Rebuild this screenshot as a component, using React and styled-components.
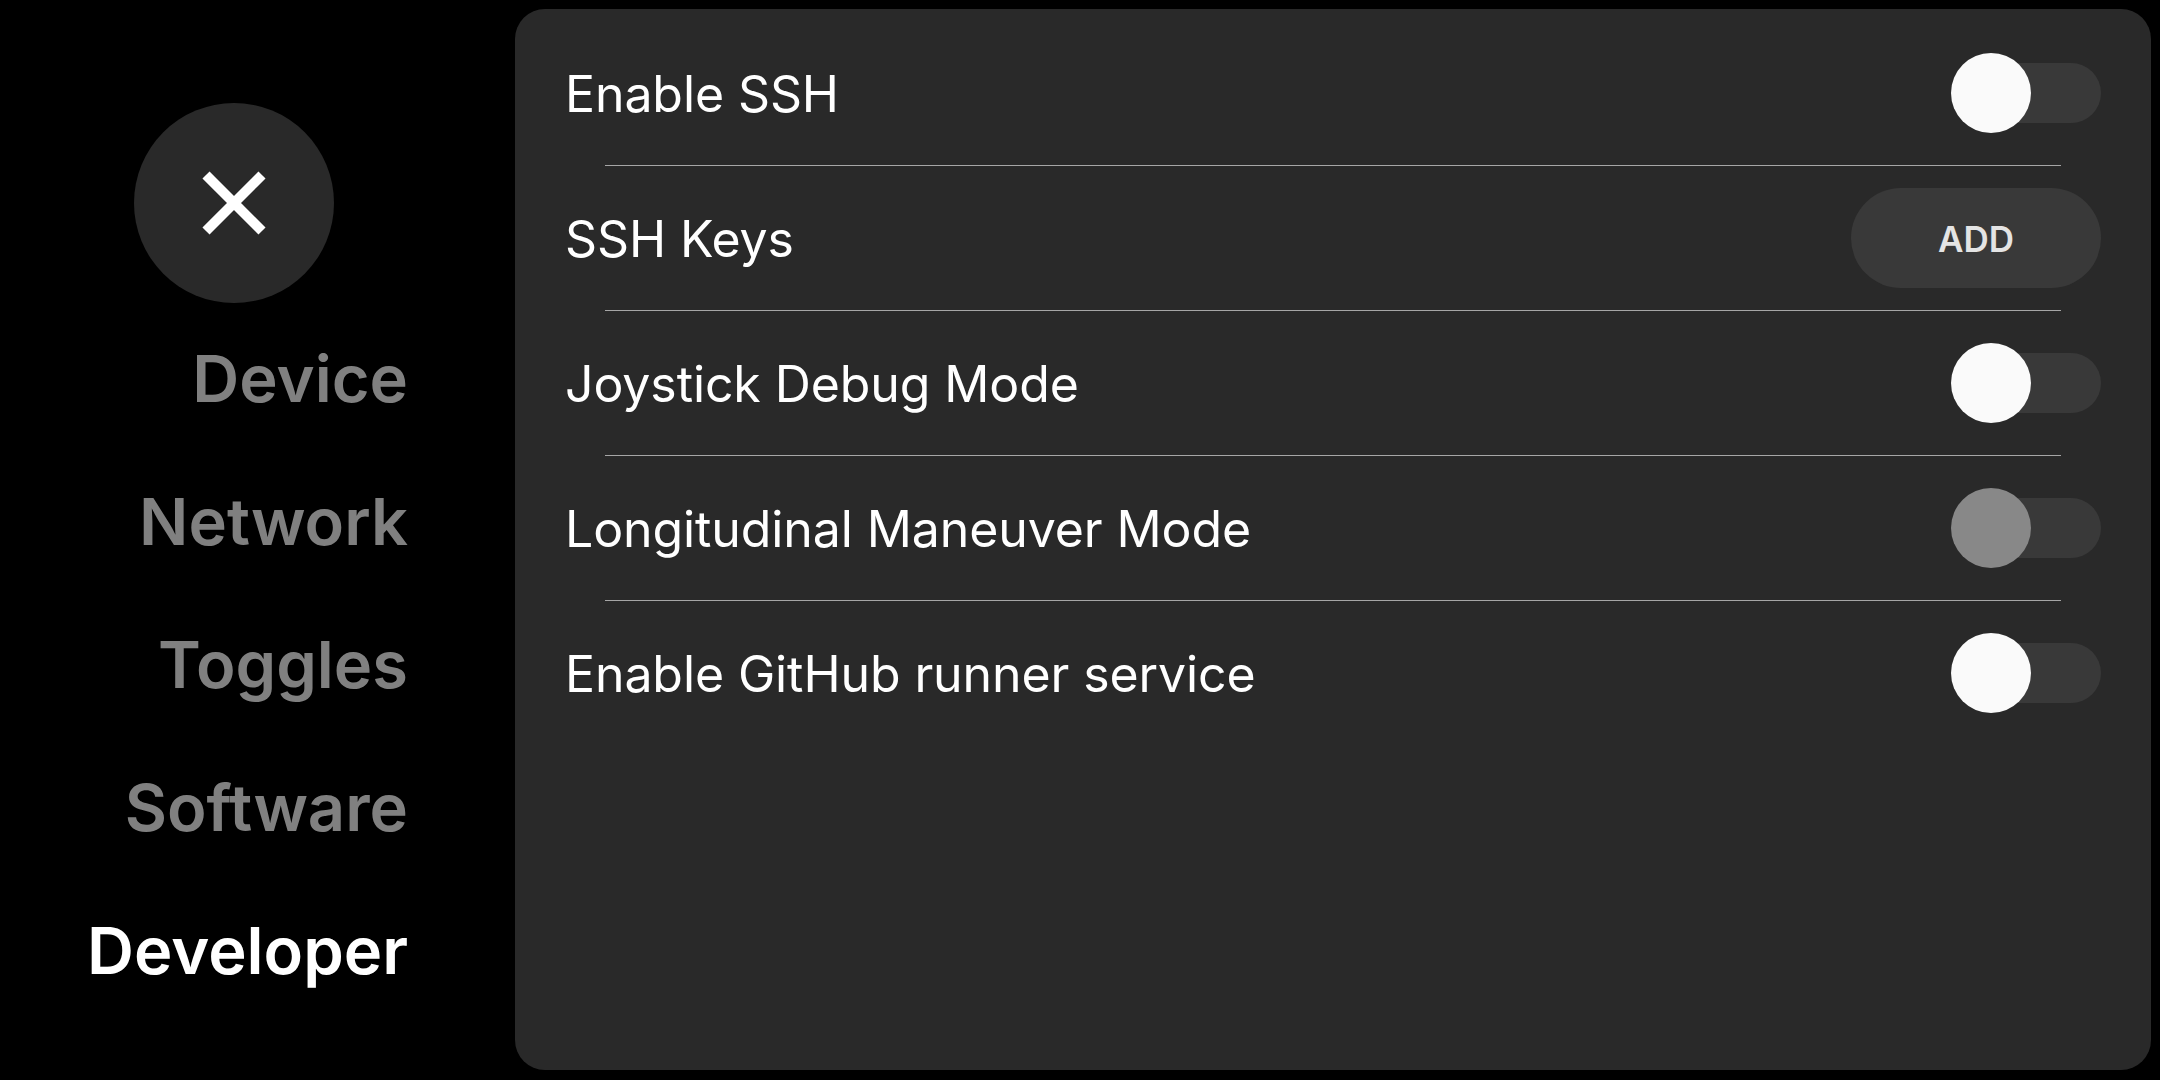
import React from 'react';
import styled, { createGlobalStyle } from 'styled-components';

const GlobalStyle = createGlobalStyle`
  html, body {
    margin: 0;
    padding: 0;
    background: #000;
  }
  body {
    font-family: Inter, "Noto Sans", "Liberation Sans", sans-serif;
    color: #fff;
  }
`;

const Screen = styled.div`
  display: flex;
  width: 2160px;
  height: 1080px;
  box-sizing: border-box;
  padding: 9px 9px 10px 0;
  background: #000;
`;

const Sidebar = styled.nav`
  display: flex;
  flex-direction: column;
  align-items: flex-end;
  width: 408px;
  margin-right: 107px;
  padding-top: 94px;
  flex-shrink: 0;
`;

const CloseButton = styled.button`
  align-self: flex-start;
  display: flex;
  align-items: center;
  justify-content: center;
  width: 200px;
  height: 200px;
  margin-left: 134px;
  margin-bottom: 4px;
  border: none;
  border-radius: 50%;
  background: #292929;
  padding: 0;
  cursor: pointer;
`;

const NavItem = styled.div`
  display: flex;
  align-items: center;
  height: 143px;
  font-size: 65px;
  font-weight: 600;
  color: ${(p) => (p.active ? '#fff' : '#808080')};
`;

const Panel = styled.section`
  flex: 1;
  display: flex;
  flex-direction: column;
  padding: 12px 50px 0;
  background: #292929;
  border-radius: 30px;
`;

const Row = styled.div`
  display: flex;
  align-items: center;
  justify-content: space-between;
  height: 144px;
`;

const Label = styled.span`
  padding-top: 2px;
  font-size: 50px;
  font-weight: 400;
  letter-spacing: -0.1px;
  color: #fff;
`;

const Divider = styled.div`
  height: 1px;
  margin: 0 40px;
  background: #a6a6a6;
`;

const Switch = styled.div`
  position: relative;
  width: 150px;
  height: 80px;
  flex-shrink: 0;
`;

const Track = styled.div`
  position: absolute;
  top: 10px;
  left: 10px;
  right: 0;
  height: 60px;
  border-radius: 30px;
  background: #393939;
`;

const Knob = styled.div`
  position: absolute;
  top: 0;
  left: 0;
  width: 80px;
  height: 80px;
  border-radius: 50%;
  background: ${(p) => (p.disabled ? '#888888' : '#fafafa')};
`;

const AddButton = styled.button`
  width: 250px;
  height: 100px;
  padding-top: 2px;
  border: none;
  border-radius: 50px;
  background: #393939;
  color: #e4e4e4;
  font-family: Inter, "Liberation Sans", sans-serif;
  font-size: 35px;
  font-weight: 600;
  cursor: pointer;
`;

function Toggle({ disabled }) {
  return (
    <Switch>
      <Track />
      <Knob disabled={disabled} />
    </Switch>
  );
}

const items = [
  { label: 'Enable SSH', control: 'toggle' },
  { label: 'SSH Keys', control: 'add' },
  { label: 'Joystick Debug Mode', control: 'toggle' },
  { label: 'Longitudinal Maneuver Mode', control: 'toggle', disabled: true },
  { label: 'Enable GitHub runner service', control: 'toggle' },
];

const nav = ['Device', 'Network', 'Toggles', 'Software', 'Developer'];

export default function App() {
  return (
    <Screen>
      <GlobalStyle />
      <Sidebar>
        <CloseButton aria-label="close">
          <svg width="64" height="64" viewBox="0 0 64 64">
            <path d="M4 4 L60 60 M60 4 L4 60" stroke="#fff" strokeWidth="10" />
          </svg>
        </CloseButton>
        {nav.map((n) => (
          <NavItem key={n} active={n === 'Developer'}>
            {n}
          </NavItem>
        ))}
      </Sidebar>
      <Panel>
        {items.map((it, i) => (
          <React.Fragment key={it.label}>
            {i > 0 && <Divider />}
            <Row>
              <Label>{it.label}</Label>
              {it.control === 'add' ? (
                <AddButton>ADD</AddButton>
              ) : (
                <Toggle disabled={it.disabled} />
              )}
            </Row>
          </React.Fragment>
        ))}
      </Panel>
    </Screen>
  );
}
